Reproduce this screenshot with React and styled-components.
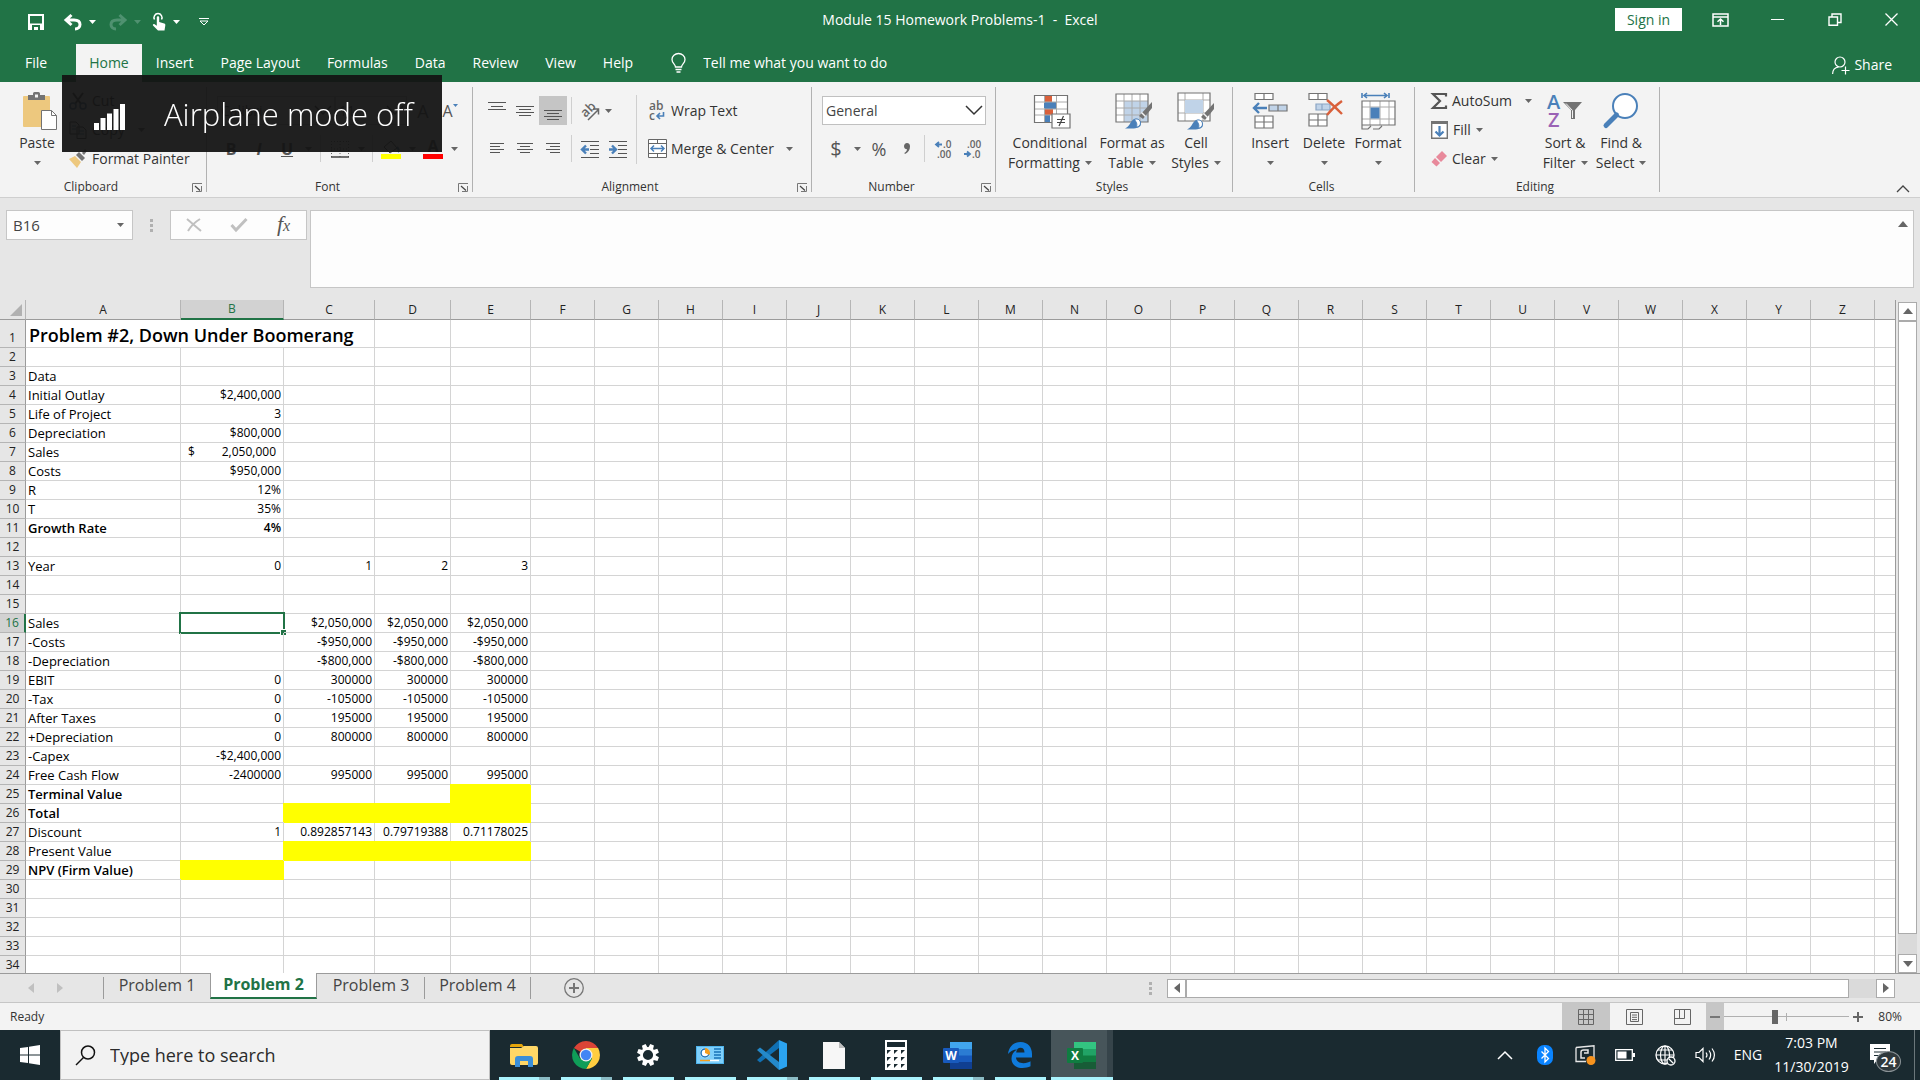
import React from "react";
import styled, { createGlobalStyle, css } from "styled-components";

const uiFont = `"Open Sans", "Noto Sans", sans-serif`;

/* ---------- sheet data ---------- */

const columns = [
  ["A", 155],
  ["B", 103],
  ["C", 91],
  ["D", 76],
  ["E", 80],
  ..."FGHIJKLMNOPQRSTUVWXYZ".split("").map((c) => [c, 64]),
  ["", 64],
];

const rows = {
  3: { cells: ["Data"] },
  4: { cells: ["Initial Outlay", "$2,400,000"] },
  5: { cells: ["Life of Project", "3"] },
  6: { cells: ["Depreciation", "$800,000"] },
  7: { cells: ["Sales", "2,050,000"], accounting: 1 },
  8: { cells: ["Costs", "$950,000"] },
  9: { cells: ["R", "12%"] },
  10: { cells: ["T", "35%"] },
  11: { cells: ["Growth Rate", "4%"], bold: true },
  13: { cells: ["Year", "0", "1", "2", "3"] },
  16: { cells: ["Sales", "", "$2,050,000", "$2,050,000", "$2,050,000"] },
  17: { cells: ["-Costs", "", "-$950,000", "-$950,000", "-$950,000"] },
  18: { cells: ["-Depreciation", "", "-$800,000", "-$800,000", "-$800,000"] },
  19: { cells: ["EBIT", "0", "300000", "300000", "300000"] },
  20: { cells: ["-Tax", "0", "-105000", "-105000", "-105000"] },
  21: { cells: ["After Taxes", "0", "195000", "195000", "195000"] },
  22: { cells: ["+Depreciation", "0", "800000", "800000", "800000"] },
  23: { cells: ["-Capex", "-$2,400,000"] },
  24: { cells: ["Free Cash Flow", "-2400000", "995000", "995000", "995000"] },
  25: { cells: ["Terminal Value"], bold: true, fill: [4] },
  26: { cells: ["Total"], bold: true, fill: [2, 3, 4] },
  27: { cells: ["Discount", "1", "0.892857143", "0.79719388", "0.71178025"] },
  28: { cells: ["Present Value"], fill: [2, 3, 4] },
  29: { cells: ["NPV (Firm Value)"], bold: true, fill: [1] },
};

const rowNumbers = Array.from({ length: 33 }, (_, i) => i + 2);

/* ---------- icons ---------- */

const Svg = ({ w, h, x = 0, children }) => (
  <svg width={w} height={h} viewBox={`${x} 0 ${w} ${h}`} fill="none" aria-hidden="true">
    {children}
  </svg>
);

const Caret = ({ color = "#666" }) => (
  <Svg w={7} h={4}>
    <path d="M0 0h7L3.5 4z" fill={color} />
  </Svg>
);

const SaveIcon = () => (
  <Svg w={16} h={16}>
    <path d="M0 0h16v16H0zM2 2v7.500h12V2zM4 11v5h2v-3h2v3h4v-5z" fill="#fff" fillRule="evenodd" />
    <path d="M8 13h2v3H8z" fill="#fff" />
  </Svg>
);

const UndoIcon = ({ flip, color = "#fff" }) => (
  <Svg w={18} h={16}>
    <g transform={flip ? "translate(18 0) scale(-1 1)" : undefined}>
      <path d="M7.500 1L2 6l5.500 5M2 6h8c4 0 6 2 6 4.500S14 15 11 15" stroke={color} strokeWidth="3" />
    </g>
  </Svg>
);

const TouchIcon = () => (
  <Svg w={14} h={18}>
    <path d="M2.500 6.500a4 4 0 1 1 7 0" stroke="#fff" strokeWidth="1.500" />
    <path d="M4.800 4.500c0-1.600 2.400-1.600 2.400 0V9l5 1.500c1 .4 1.300 1 1.100 2L12.500 17.500H6L1 12.500c-.6-1 .6-2 1.600-1.200l2.200 1.400z" fill="#fff" />
  </Svg>
);

const QatMoreIcon = () => (
  <Svg w={10} h={8}>
    <path d="M0 .5h10M1 3h8L5 7z" stroke="#fff" />
  </Svg>
);

const RibbonDisplayIcon = () => (
  <Svg w={17} h={14}>
    <path d="M1 1h15v12H1zM1 4h15" stroke="#fff" strokeWidth="1.500" />
    <path d="M8.500 12V6M5.500 8.700L8.500 6l3 2.700" stroke="#fff" strokeWidth="1.500" />
  </Svg>
);

const MinimizeIcon = () => (
  <Svg w={13} h={13}>
    <path d="M0 6.500h13" stroke="#fff" />
  </Svg>
);

const RestoreIcon = () => (
  <Svg w={14} h={13}>
    <path d="M1 4h8.500v8.300H1zM4 4V1h9v8.500H9.500" stroke="#fff" strokeWidth="1.400" />
  </Svg>
);

const CloseIcon = () => (
  <Svg w={13} h={13}>
    <path d="M.5.5l12 12M12.500.5l-12 12" stroke="#fff" strokeWidth="1.300" />
  </Svg>
);

const BulbIcon = () => (
  <Svg w={15} h={20}>
    <path d="M4.500 14c0-3-3.500-3.500-3.500-7.500a6.500 6 0 0 1 13 0C14 10.500 10.500 11 10.500 14zM4.500 16.500h6M5.500 19h4" stroke="#fff" strokeWidth="1.300" />
  </Svg>
);

const ShareIcon = () => (
  <Svg w={18} h={19}>
    <circle cx="8" cy="6" r="5" stroke="#fff" strokeWidth="1.200" />
    <path d="M.6 18c0-4 2.400-6.500 6-7M13.500 10.500v8M9.500 14.500h8" stroke="#fff" strokeWidth="1.200" />
  </Svg>
);

const PasteIcon = () => (
  <Svg w={39} h={38} x={-4}>
    <rect x="1" y="4" width="27" height="31" rx="1" fill="#edc87e" />
    <path d="M6 3h5V1.500Q11 0 12.500 0h4Q18 0 18 1.500V3h5v5H6z" fill="#737373" />
    <path d="M13 2.500h3v3h-3z" fill="#f3f3f3" />
    <path d="M19.500 18.500h10l5 5v14h-15z" fill="#fff" stroke="#737373" />
    <path d="M29.500 18.500v5h5" stroke="#737373" />
  </Svg>
);

const CutIcon = () => (
  <Svg w={18} h={18}>
    <path d="M4 1l8 11M14 1L6 12" stroke="#444" strokeWidth="2" />
    <circle cx="4" cy="14" r="3" stroke="#41719c" strokeWidth="1.500" />
    <circle cx="14" cy="14" r="3" stroke="#41719c" strokeWidth="1.500" />
  </Svg>
);

const CopyIcon = () => (
  <Svg w={18} h={18}>
    <path d="M1 1h6l3 3v9H1zM8 6h6l3 3v8.500H8z" fill="#fff" stroke="#444" />
    <path d="M3 5h4M3 8h4M10 10h5M10 13h5" stroke="#41719c" />
  </Svg>
);

const PainterIcon = () => (
  <Svg w={18} h={18}>
    <path d="M0 9l6-3 6 6-4 6z" fill="#edc87e" />
    <path d="M7 5l3-3 6 6-3 3z" fill="#737373" />
    <path d="M13 3l3-4 2 2-3 4z" fill="#737373" />
  </Svg>
);

const LauncherIcon = () => (
  <Svg w={10} h={9}>
    <path d="M.5 9V.5H10M9.500 3v5.500H4" stroke="#777" />
    <path d="M3 3l5 4.500" stroke="#444" strokeWidth="1.200" />
  </Svg>
);

const BordersIcon = () => (
  <Svg w={18} h={18}>
    <path d="M.5 1v16M17.500 1v16M9 1v16M0 1.500h18M0 9h18" stroke="#666" strokeDasharray="1 2" />
    <path d="M0 17h18" stroke="#444" strokeWidth="1.500" />
  </Svg>
);

const FillColorIcon = () => (
  <Svg w={20} h={20}>
    <path d="M3 8l7-6 6 7-7 5z" fill="#fff" stroke="#444" />
    <path d="M16 8c2 2 2 4 1 5" stroke="#41719c" strokeWidth="2" />
    <path d="M0 15h20v5H0z" fill="#ff0" />
  </Svg>
);

// one bar per entry: [x, y, width]
const Lines = ({ w = 18, h = 18, list }) => (
  <Svg w={w} h={h}>
    {list.map(([x, y, len]) => (
      <path key={`${x}-${y}`} d={`M${x} ${y}.5h${len}`} stroke="#555" />
    ))}
  </Svg>
);

const topLines = [[0, 0, 18], [3, 4, 12], [0, 7, 18]];
const midLines = [[0, 4, 18], [3, 7, 12], [0, 10, 18], [3, 13, 12]];
const bottomLines = [[0, 8, 18], [3, 11, 12], [0, 14, 18], [3, 17, 12]];
const leftLines = [[2, 3, 14], [2, 6, 10], [2, 9, 14], [2, 12, 10]];
const centerLines = [[1, 3, 16], [4, 6, 10], [1, 9, 16], [4, 12, 10]];
const rightLines = [[2, 3, 14], [6, 6, 10], [2, 9, 14], [6, 12, 10]];

const IndentIcon = ({ out }) => (
  <Svg w={18} h={18}>
    <path d="M0 1.500h18M9 5.500h9M9 9.500h9M9 13.500h9M0 17.500h18" stroke="#555" />
    <path d={out ? "M8 9.500H2M5 5.500l-4 4 4 4" : "M0 9.500h6M3 5.500l4 4-4 4"} stroke="#4a80b9" strokeWidth="2.400" />
  </Svg>
);

const OrientationIcon = () => (
  <Svg w={20} h={20}>
    <text x="1" y="14" transform="rotate(-45 7 10)" fontFamily="Open Sans" fontSize="13" fontWeight="600" fill="#666">
      ab
    </text>
    <path d="M8 19L18 9M13 8h5.500v5.500" stroke="#666" strokeWidth="1.500" />
  </Svg>
);

const WrapIcon = () => (
  <Svg w={18} h={20}>
    <text x="1" y="9" fontFamily="Open Sans" fontSize="12" fontWeight="600" fill="#666">
      ab
    </text>
    <text x="1" y="19" fontFamily="Open Sans" fontSize="12" fontWeight="600" fill="#666">
      c
    </text>
    <path d="M15.500 11v4H9.500M12 12l-3 3 3 3" stroke="#4a80b9" strokeWidth="1.600" />
  </Svg>
);

const MergeIcon = () => (
  <Svg w={19} h={19}>
    <path d="M.5.500h18v18H.5zM.5 4.500h18M.5 14.500h18M9.500.5v4M9.500 14.500v4" fill="#fff" stroke="#666" />
    <path d="M3 9.500h13M6 6.500l-3 3 3 3M13 6.500l3 3-3 3" stroke="#4a80b9" strokeWidth="1.500" />
  </Svg>
);

const CommaIcon = () => (
  <Svg w={8} h={12}>
    <path d="M4 0c2 0 3 1.400 3 3.500C7 7 5 9.500 2 11l-.7-1C3 9 4 7.700 4 6.200 2.300 6.200 1 5 1 3.200S2.300 0 4 0z" fill="#666" />
  </Svg>
);

const DecimalIcon = ({ increase }) => (
  <Svg w={18} h={18}>
    <text x={increase ? 8 : 4} y="8" fontFamily="Open Sans" fontSize="10" fontWeight="600" fill="#666">
      {increase ? ".0" : ".00"}
    </text>
    <text x={increase ? 2 : 9} y="18" fontFamily="Open Sans" fontSize="10" fontWeight="600" fill="#666">
      {increase ? ".00" : ".0"}
    </text>
    <path d={increase ? "M7 4.500H2M4 2L1 4.500 4 7" : "M1 14h5M4 11.500L7 14l-3 2.500"} stroke="#4a80b9" strokeWidth="1.800" />
  </Svg>
);

const ConditionalIcon = () => (
  <Svg w={41} h={36} x={-3}>
    <path d="M1 2h33v27H1z" fill="#fff" />
    <path d="M11 2h8v7h-8zM11 16h9v6h-9z" fill="#d9603b" />
    <path d="M11 9h12v7H11zM11 22h6v7h-6z" fill="#4a80b9" />
    <path d="M1 9h33M1 16h33M1 22h33M11.500 2v27M23.500 2v27" stroke="#aaa" />
    <path d="M11 10h12v5H11z" fill="#4a80b9" />
    <path d="M1.500 2.500h33v27h-33z" stroke="#737373" strokeWidth="1.200" />
    <path d="M19 21h18v14H19z" fill="#fff" stroke="#737373" strokeWidth="1.200" />
    <path d="M24 26.500h8M24 29.500h8M30.500 23l-4.500 10" stroke="#444" strokeWidth="1.200" />
  </Svg>
);

const Brush = () => (
  <>
    <path d="M24 23L37 9v6l-9 11z" fill="#737373" />
    <path d="M26.500 19.500l4 4" stroke="#f3f3f3" strokeWidth="1.500" />
    <path d="M10 35.500c5-2 5-7 9-9.500 3-1 7 1 7 5 0 3-4 4.500-9 4.500z" fill="#4a80b9" />
    <path d="M19.500 26.500c3-1.500 6 .5 6 3.500s-2.500 4-4.500 4c1.500-2 1-4-1.500-7.500z" fill="#fff" stroke="#4a80b9" />
  </>
);

const FormatTableIcon = () => (
  <Svg w={41} h={36} x={-3}>
    <path d="M1 1h32v28H1z" fill="#fff" />
    <path d="M9 8h24v21H9z" fill="#c0d3e8" />
    <path d="M1 8h32M1 15h32M1 22h32M9 1v28M17 1v28M25 1v28" stroke="#aaa" />
    <path d="M1 1h32v28H1z" stroke="#737373" strokeWidth="1.200" />
    <Brush />
  </Svg>
);

const CellStylesIcon = () => (
  <Svg w={38} h={38}>
    <path d="M1 1h32v28H1z" fill="#fff" />
    <path d="M8 1v28M26 1v28M1 8h32M1 21h32" stroke="#aaa" />
    <path d="M8 8h18v13H8z" fill="#c0d3e8" />
    <path d="M1 1h32v28H1z" stroke="#737373" strokeWidth="1.200" />
    <g transform="translate(0 2)">
      <Brush />
    </g>
  </Svg>
);

const InsertIcon = () => (
  <Svg w={38} h={38}>
    <path d="M4 1.500h18v6H4zM13 1.500v6M4 24h18v12H4zM13 24v12M4 30h18" fill="#fff" stroke="#737373" strokeWidth="1.200" />
    <path d="M18 13h18v6H18zM27 13v6" fill="#c0d3e8" stroke="#737373" strokeWidth="1.200" />
    <path d="M16 16H3M8 11l-5 5 5 5" stroke="#4a80b9" strokeWidth="2.400" />
  </Svg>
);

const DeleteIcon = () => (
  <Svg w={38} h={38}>
    <path d="M4 1.500h18v6H4zM13 1.500v6M4 22h18v12H4zM13 22v12M4 28h18" fill="#fff" stroke="#737373" strokeWidth="1.200" />
    <path d="M11 12h14v6H11zM17 12v6" fill="#c0d3e8" stroke="#8aa5c4" strokeWidth="1.200" />
    <path d="M22 8c5 4 10 9 15 14M37 9c-6 4-11 9-15 14" stroke="#d9603b" strokeWidth="2.400" />
  </Svg>
);

const FormatIcon = () => (
  <Svg w={38} h={38}>
    <path d="M3 1v5M30 1v5M5 3.500h23M8 1L5 3.500 8 6M25 1l3 2.500L25 6" stroke="#4a80b9" strokeWidth="1.600" />
    <path d="M3 9h33v24H3z" fill="#fff" />
    <path d="M3 15h33M3 27h33M11 9v24M21 9v24M30 9v24" stroke="#aaa" />
    <path d="M11.500 15.500h9v11h-9z" fill="#4a80b9" />
    <path d="M3 9h33v24H3zM3 33v4h6l3-3M14 37h6l3-3" stroke="#737373" strokeWidth="1.200" />
  </Svg>
);

const SumIcon = () => (
  <Svg w={16} h={18}>
    <path d="M15 4.500V2H2l7 7-7 7h13v-2.500" stroke="#555" strokeWidth="2.200" />
  </Svg>
);

const FillDownIcon = () => (
  <Svg w={17} h={18}>
    <path d="M.7.700h15.600v16.600H.7z" fill="#fff" stroke="#737373" strokeWidth="1.400" />
    <path d="M0 0h17v3H0z" fill="#737373" />
    <path d="M8.500 5v9M4.500 10.500l4 4 4-4" stroke="#4a80b9" strokeWidth="2.200" />
  </Svg>
);

const EraserIcon = () => (
  <Svg w={16} h={16}>
    <path d="M5 6l6-6 5 5-6 6z" fill="#e8899b" />
    <path d="M4 7l5 5-3.500 3.500-5-4.500z" fill="#e8899b" />
  </Svg>
);

const SortIcon = () => (
  <Svg w={36} h={36}>
    <text x="0" y="16" fontFamily="Open Sans" fontSize="20" fontWeight="600" fill="#4a80b9">
      A
    </text>
    <text x="1" y="34" fontFamily="Open Sans" fontSize="20" fontWeight="600" fill="#9a62b5">
      Z
    </text>
    <path d="M16 9h19l-7 8v9h-4v-9z" fill="#737373" />
    <path d="M19 10.500l6.500 7V25" stroke="#f3f3f3" />
  </Svg>
);

const FindIcon = () => (
  <Svg w={36} h={36}>
    <circle cx="22" cy="13" r="12" fill="#fff" stroke="#4a80b9" strokeWidth="2" />
    <path d="M13.500 22L3 32.500" stroke="#4a80b9" strokeWidth="5" strokeLinecap="round" />
  </Svg>
);

const CollapseIcon = () => (
  <Svg w={14} h={8}>
    <path d="M1 7l6-6 6 6" stroke="#444" strokeWidth="1.300" />
  </Svg>
);

const ChevronDown = () => (
  <Svg w={18} h={11}>
    <path d="M1 1l8 8 8-8" stroke="#333" strokeWidth="1.500" />
  </Svg>
);

const SignalIcon = () => (
  <Svg w={31} h={26}>
    <path d="M0 19h5v7H0zM6.500 14h5v12h-5zM13 9.500h5V26h-5zM19.500 5h5v21h-5zM26 0h5v26h-5z" fill="#fff" />
  </Svg>
);

const DotsIcon = () => (
  <Svg w={3} h={13}>
    <path d="M0 0h3v3H0zM0 5h3v3H0zM0 10h3v3H0z" fill="#b0b0b0" />
  </Svg>
);

const CancelIcon = () => (
  <Svg w={16} h={14}>
    <path d="M1 1l14 12M14 1C9 4 5 8 2 13" stroke="#c0c0c0" strokeWidth="2" />
  </Svg>
);

const EnterIcon = () => (
  <Svg w={18} h={14}>
    <path d="M1.500 7L6 12 16.500 1" stroke="#c0c0c0" strokeWidth="3" />
  </Svg>
);

const Triangle = ({ dir, color = "#666" }) => {
  const d = { up: "M0 6h10L5 0z", down: "M0 1h10L5 7z", left: "M6 0v10L0 5z", right: "M0 0v10l6-5z" }[dir];
  const tall = dir === "left" || dir === "right";
  return (
    <Svg w={tall ? 6 : 10} h={tall ? 10 : 7}>
      <path d={d} fill={color} />
    </Svg>
  );
};

const PlusCircle = () => (
  <Svg w={20} h={20}>
    <circle cx="10" cy="10" r="9.300" stroke="#777" strokeWidth="1.300" />
    <path d="M10 5v10M5 10h10" stroke="#777" strokeWidth="2" />
  </Svg>
);

const NormalViewIcon = () => (
  <Svg w={16} h={16}>
    <path d="M.5.500h15v15H.5zM5.500.5v15M10.500.5v15M.5 5.500h15M.5 10.500h15" stroke="#666" />
  </Svg>
);

const PageViewIcon = () => (
  <Svg w={17} h={16}>
    <path d="M.5.500h16v15H.5zM4.500 3.500h8v9h-8z" stroke="#666" />
    <path d="M6 6h5M6 8.300h5M6 10.600h5" stroke="#666" />
  </Svg>
);

const BreakViewIcon = () => (
  <Svg w={17} h={16}>
    <path d="M.5.500h16v15H.5zM.5 9.500h10V.5M5.500.5v9" stroke="#666" />
  </Svg>
);

const WindowsIcon = () => (
  <Svg w={20} h={20}>
    <path d="M0 3l8-1v7.500H0zM9 1.800L20 0v9.500H9zM0 10.500h8V18l-8-1zM9 10.500h11V20L9 18.200z" fill="#fff" />
  </Svg>
);

const SearchIcon = () => (
  <Svg w={21} h={21}>
    <circle cx="13" cy="7.500" r="6.500" stroke="#111" strokeWidth="1.500" />
    <path d="M8.500 12.500L1 20" stroke="#111" strokeWidth="1.500" />
  </Svg>
);

const ExplorerIcon = () => (
  <Svg w={28} h={24}>
    <path d="M0 3q0-2 2-2h10l2 3H0z" fill="#e5a50a" />
    <path d="M0 5h11l3-2h12q2 0 2 2v15q0 2-2 2H2q-2 0-2-2z" fill="#ffd766" />
    <path d="M5 24v-8q0-3 3-3h12q3 0 3 3v8h-5v-6h-8v6z" fill="#3b8fd9" />
  </Svg>
);

const ChromeIcon = () => (
  <Svg w={28} h={28}>
    <path d="M14 14L1.900 7A14 14 0 0 1 26.100 7z" fill="#db4437" />
    <path d="M14 14V7h12.100A14 14 0 0 1 14 28l6-11z" fill="#ffcd40" />
    <path d="M14 14L8 17.500 1.900 7A14 14 0 0 0 14 28l6-10.500z" fill="#0f9d58" />
    <circle cx="14" cy="14" r="6.500" fill="#f1f1f1" />
    <circle cx="14" cy="14" r="5.200" fill="#4285f4" />
  </Svg>
);

const GearIcon = () => (
  <Svg w={22} h={22}>
    <circle cx="11" cy="11" r="6.500" stroke="#fff" strokeWidth="2.800" />
    {[22, 67, 112, 157, 202, 247, 292, 337].map((a) => (
      <path key={a} d="M9 0h4l.5 4h-5z" fill="#fff" transform={`rotate(${a} 11 11)`} />
    ))}
  </Svg>
);

const PanelIcon = () => (
  <Svg w={28} h={20}>
    <path d="M0 1h28v18H0z" fill="#4fb4ec" />
    <path d="M1 2h26v16H1z" fill="#7fd0fb" />
    <circle cx="9" cy="8" r="5" fill="#fff" />
    <circle cx="9" cy="8" r="4" stroke="#1873b8" strokeWidth="1.500" />
    <path d="M9 8V3a5 5 0 0 1 4.500 7z" fill="#f59e1b" />
    <path d="M18 4h7M18 7h7M18 10h7M18 13h7" stroke="#1873b8" strokeWidth="1.500" />
    <path d="M4 15.500h10" stroke="#f59e1b" strokeWidth="1.500" />
    <path d="M14 15.500h9" stroke="#fff" strokeWidth="1.500" />
  </Svg>
);

const CodeIcon = () => (
  <Svg w={30} h={30}>
    <path d="M0 20l3 2.500L22 8V0z" fill="#1070b3" />
    <path d="M0 10l3-2.500L22 22v8z" fill="#2489ca" />
    <path d="M22 0l8 3.500v23L22 30z" fill="#2ba3f0" />
  </Svg>
);

const FileIcon = () => (
  <Svg w={22} h={27}>
    <path d="M0 0h16l6 6v21H0z" fill="#f7f7f7" />
    <path d="M16 0v6h6z" fill="#bdbdbd" />
  </Svg>
);

const CalcIcon = () => (
  <Svg w={22} h={30}>
    <path d="M0 0h22v30H0z" fill="#fff" />
    <path d="M2 2h18v5H2z" fill="#1a2a30" />
    {[10, 17, 24].map((y) =>
      [2, 9, 16].map((x) => <path key={`${x}-${y}`} d={`M${x} ${y}h4l-4 4z`} fill="#1a2a30" />)
    )}
  </Svg>
);

const OfficeIcon = ({ letter, shades, badge }) => (
  <Svg w={30} h={27}>
    <path d="M7 0h22v7H7z" fill={shades[0]} />
    <path d="M7 7h22v7H7z" fill={shades[1]} />
    <path d="M7 13.500h22v7H7z" fill={shades[2]} />
    <path d="M7 20h22v7H7z" fill={shades[3]} />
    <rect y="6" width="16" height="15" rx="1" fill={badge} />
    <text x="8" y="18" textAnchor="middle" fontFamily="Open Sans" fontSize="12" fontWeight="700" fill="#fff">
      {letter}
    </text>
  </Svg>
);

const EdgeIcon = () => (
  <Svg w={24} h={26}>
    <path
      d="M0 12C1 4 6 0 12.500 0 20 0 24 5.500 24 12v3.500H8c.3 4 3.500 5.700 7.500 5.700 3 0 5.300-.8 7-1.900v5c-2.200 1.200-5 1.700-8 1.700C7.500 26 3.500 22 3.500 16.500c0-4 2-7 5.500-9C5.500 7.500 2 9.500 0 12zm8.200-1.500h8.300c0-3-1.300-4.700-4-4.700-2.400 0-4 1.900-4.300 4.700z"
      fill="#0f7bdc"
      fillRule="evenodd"
    />
  </Svg>
);

const TrayCaret = () => (
  <Svg w={16} h={9}>
    <path d="M1 8l7-7 7 7" stroke="#fff" strokeWidth="1.500" />
  </Svg>
);

const BluetoothIcon = () => (
  <Svg w={16} h={20}>
    <rect width="16" height="20" rx="7" fill="#0a84ff" />
    <path d="M4.500 6.500l7 7L8 17V3l3.500 3.500-7 7" stroke="#fff" strokeWidth="1.300" />
  </Svg>
);

const TabletIcon = () => (
  <Svg w={21} h={20}>
    <path d="M1 2.500L19 .8v13M11 16.500H1v-14" stroke="#e8e8e8" strokeWidth="1.300" />
    <path d="M10 13H6V7q0-2 2.500-2H13v3H9" stroke="#e8e8e8" strokeWidth="1.500" />
    <circle cx="16" cy="15.500" r="4.500" fill="#f7931e" />
  </Svg>
);

const BatteryIcon = () => (
  <Svg w={20} h={12}>
    <path d="M.7.700h16.600v10.600H.7z" stroke="#fff" strokeWidth="1.300" />
    <path d="M2.500 2.500h9v7h-9zM18 4h2v4h-2z" fill="#fff" />
  </Svg>
);

const GlobeIcon = () => (
  <Svg w={21} h={21}>
    <circle cx="10" cy="10" r="9" stroke="#fff" strokeWidth="1.300" />
    <path d="M10 1v18M1 10h18M3 5h14M3 15h9" stroke="#fff" strokeWidth="1.200" />
    <ellipse cx="10" cy="10" rx="4.500" ry="9" stroke="#fff" strokeWidth="1.200" />
    <circle cx="16" cy="16" r="4" fill="#1a2a30" stroke="#fff" strokeWidth="1.300" />
    <path d="M13.500 13.500l5 5" stroke="#fff" strokeWidth="1.300" />
  </Svg>
);

const SpeakerIcon = () => (
  <Svg w={21} h={16}>
    <path d="M1 5.500h3l4-4v13l-4-4H1z" stroke="#fff" strokeWidth="1.200" />
    <path d="M11 5.500c1.200 1.500 1.200 3.500 0 5M14 3.500c2 2.700 2 6.300 0 9M17 1.500c3 4 3 9 0 13" stroke="#fff" strokeWidth="1.200" />
  </Svg>
);

const NoteIcon = () => (
  <Svg w={20} h={20}>
    <path d="M0 0h20v16H7l-3 4v-4H0z" fill="#fff" />
    <path d="M4 4.500h12M4 8h12M4 11.500h8" stroke="#1a2a30" strokeWidth="1.200" />
  </Svg>
);

/* ---------- styled parts ---------- */

const GlobalStyle = createGlobalStyle`
  * {
    box-sizing: border-box;
  }

  body {
    margin: 0;
    background: #e6e6e6;
    overflow: hidden;
  }

  svg {
    display: block;
    flex-shrink: 0;
    overflow: visible;
  }

  button, input, select, textarea {
    font: inherit;
    color: inherit;
    margin: 0;
    padding: 0;
    border: 0;
    border-radius: 0;
    background: none;
    outline: 0;
  }

  a {
    color: inherit;
    text-decoration: none;
  }
`;

const Window = styled.div`
  display: flex;
  flex-direction: column;
  height: 100vh;
  font-family: ${uiFont};
  font-size: 14px;
  line-height: 20px;
  color: #333;
`;

const TitleBar = styled.header`
  display: grid;
  grid-template-columns: 1fr auto 1fr;
  align-items: center;
  height: 44px;
  padding-bottom: 5px;
  background: #217346;
  color: #fff;
`;

const QuickAccess = styled.div`
  display: flex;
  align-items: center;
  padding: 5px 0 0 22px;
`;

const QuickButton = styled.button`
  display: flex;
  align-items: center;
  justify-content: center;
  gap: 7px;
  height: 28px;
  width: ${(p) => p.$width}px;
`;

const WindowControls = styled.div`
  display: flex;
  justify-content: flex-end;
  align-items: center;
`;

const ControlButton = styled.button`
  display: flex;
  align-items: center;
  justify-content: center;
  width: 57px;
  height: 32px;
`;

const SignIn = styled.button`
  width: 67px;
  height: 23px;
  margin-right: 10px;
  background: #fff;
  color: #217346;
`;

const TabBar = styled.nav`
  display: flex;
  align-items: stretch;
  gap: 1px;
  height: 38px;
  padding-left: 12px;
  background: #217346;
  color: #fff;
`;

const RibbonTab = styled.a`
  display: flex;
  align-items: center;
  padding: 0 13px;

  ${(p) =>
    p.$file &&
    css`
      margin-right: 15px;
    `}

  ${(p) =>
    p.$active &&
    css`
      background: #f3f3f3;
      color: #217346;
    `}
`;

const TellMe = styled.label`
  display: flex;
  align-items: center;
  gap: 17px;
  margin-left: 24px;

  input {
    width: 240px;
  }

  input::placeholder {
    color: #fff;
    opacity: 1;
  }
`;

const Share = styled.button`
  display: flex;
  align-items: center;
  gap: 4px;
  margin-left: auto;
  padding: 4px 28px 0 0;
`;

const Ribbon = styled.section`
  display: flex;
  height: 116px;
  background: #f3f3f3;
  border-bottom: 1px solid #cfcfcf;
`;

const Group = styled.div`
  display: flex;
  flex-direction: column;
  width: ${(p) => p.$width}px;
  margin: 5px 0;
  border-right: 1px solid #b1b1b1;
`;

const GroupBody = styled.div`
  display: flex;
  flex: 1;
  min-height: 0;
  padding: ${(p) => p.$pad || "0"};
`;

const GroupFooter = styled.div`
  display: flex;
  align-items: center;
  height: 18px;
  margin-bottom: -4px;
  padding-right: 4px;
  font-size: 12px;
  text-align: center;

  span {
    flex: 1;
  }

  button {
    padding-left: 10px;
  }
`;

const BigButton = styled.button`
  display: flex;
  flex-direction: column;
  align-items: center;
  width: ${(p) => p.$width}px;
  padding-top: 2px;
`;

const BigIcon = styled.span`
  display: flex;
  align-items: center;
  justify-content: center;
  height: 44px;
`;

const BigLine = styled.span`
  display: flex;
  align-items: center;
  justify-content: center;
  gap: 5px;
  height: 20px;
  white-space: nowrap;
`;

const SmallColumn = styled.div`
  display: flex;
  flex-direction: column;
  margin-top: -1px;
  padding: 0 5px;
`;

const SmallButton = styled.button`
  display: flex;
  align-items: center;
  gap: ${(p) => p.$gap || 5}px;
  height: 29px;
  white-space: nowrap;

  ${(p) =>
    p.$wide &&
    css`
      > :last-child {
        margin-left: 8px;
      }
    `}
`;

const ToolRows = styled.div`
  display: flex;
  flex-direction: column;
  gap: 9px;
  padding-top: 9px;
`;

const ToolRow = styled.div`
  display: flex;
  align-items: center;
  height: 29px;
`;

const ToolButton = styled.button`
  display: flex;
  align-items: center;
  justify-content: center;
  width: ${(p) => p.$width || 28}px;
  height: 29px;
  font-size: ${(p) => p.$size || 14}px;
  font-weight: ${(p) => (p.$bold ? 700 : 400)};
  font-style: ${(p) => (p.$italic ? "italic" : "normal")};
  text-decoration: ${(p) => (p.$underline ? "underline" : "none")};
  background: ${(p) => (p.$pressed ? "#c5c5c5" : "transparent")};
  color: #555;
`;

const FontColor = styled.span`
  width: 20px;
  height: 20px;
  line-height: 14px;
  font-weight: 700;
  font-size: 16px;
  border-bottom: 5px solid #f00;
`;

const Divider = styled.span`
  width: 1px;
  height: ${(p) => p.$height || 27}px;
  margin: ${(p) => p.$margin || "0 4px"};
  background: #cfcfcf;
`;

const SelectBox = styled.span`
  position: relative;
  display: block;
  width: ${(p) => p.$width}px;
  height: 29px;

  select {
    appearance: none;
    width: 100%;
    height: 100%;
    padding-left: 3px;
    background: #fff;
    border: 1px solid #c0c0c0;
    color: #444;
  }

  svg {
    position: absolute;
    right: 3px;
    top: 9px;
    pointer-events: none;
  }
`;

const CollapseButton = styled.button`
  margin: auto 10px 4px auto;
`;

const Toast = styled.div`
  position: fixed;
  z-index: 5;
  left: 62px;
  top: 75px;
  display: flex;
  align-items: center;
  gap: 39px;
  width: 380px;
  height: 77px;
  padding-left: 32px;
  background: rgba(20, 20, 20, 0.95);
  color: #fff;
  font-size: 31px;
  font-weight: 300;
  line-height: 40px;
  white-space: nowrap;

  svg {
    margin-top: 7px;
  }
`;

const FormulaBar = styled.section`
  display: flex;
  align-items: flex-start;
  height: 102px;
  padding: 12px 6px 0;
`;

const NameBox = styled.div`
  display: flex;
  align-items: center;
  width: 127px;
  height: 30px;
  padding: 0 8px 0 6px;
  background: #fdfdfd;
  border: 1px solid #c6c6c6;
  font-size: 15px;

  input {
    flex: 1;
    min-width: 0;
    color: #444;
  }
`;

const BarDots = styled.div`
  display: flex;
  align-items: center;
  justify-content: center;
  width: 37px;
  height: 30px;
`;

const FormulaButtons = styled.div`
  display: flex;
  justify-content: space-around;
  width: 137px;
  height: 30px;
  margin-right: 3px;
  background: #fdfdfd;
  border: 1px solid #c6c6c6;

  button {
    display: flex;
    align-items: center;
    justify-content: center;
    width: 44px;
  }
`;

const Fx = styled.span`
  font-family: "Liberation Serif", serif;
  font-style: italic;
  font-size: 22px;
  color: #555;

  small {
    font-size: 16px;
  }
`;

const FormulaInput = styled.div`
  display: flex;
  flex: 1;
  height: 78px;
  background: #fdfdfd;
  border: 1px solid #c6c6c6;

  textarea {
    flex: 1;
    resize: none;
  }

  button {
    display: flex;
    align-items: flex-start;
    padding: 10px 5px 0;
  }
`;

const Workspace = styled.main`
  display: flex;
  flex: 1;
  min-height: 0;
`;

const SheetArea = styled.div`
  flex: 1;
  min-width: 0;
  overflow: hidden;
`;

const Sheet = styled.table`
  table-layout: fixed;
  width: 1939px;
  border-spacing: 0;
  background: #fff;
  font-size: 13px;
  line-height: 18px;
  color: #000;
`;

const ColHead = styled.th`
  height: 20px;
  padding: 0;
  background: ${(p) => (p.$active ? "#d2d2d2" : "#e6e6e6")};
  border-right: 1px solid #b5b5b5;
  border-bottom: ${(p) => (p.$active ? "2px solid #217346" : "1px solid #9b9b9b")};
  color: ${(p) => (p.$active ? "#217346" : "#222")};
  font-size: 12px;
  font-weight: 400;
`;

const Corner = styled.th`
  padding: 0 3px 3px 0;
  background: #e6e6e6;
  border-right: 1px solid #b5b5b5;
  border-bottom: 1px solid #9b9b9b;
  vertical-align: bottom;

  svg {
    margin-left: auto;
  }
`;

const RowHead = styled.th`
  height: ${(p) => p.$height || 19}px;
  padding: 0;
  background: ${(p) => (p.$active ? "#d2d2d2" : "#e6e6e6")};
  border-right: ${(p) => (p.$active ? "2px solid #217346" : "1px solid #9b9b9b")};
  border-bottom: 1px solid #b5b5b5;
  color: ${(p) => (p.$active ? "#217346" : "#222")};
  font-size: 12px;
  font-weight: 400;
  vertical-align: bottom;
`;

const Cell = styled.td`
  position: relative;
  padding: 0 2px;
  border-right: 1px solid #d4d4d4;
  border-bottom: 1px solid #d4d4d4;
  text-align: ${(p) => (p.$number ? "right" : "left")};
  font-weight: ${(p) => (p.$bold ? 600 : 400)};
  font-size: ${(p) => (p.$number ? 12 : 13)}px;
  white-space: nowrap;

  ${(p) =>
    p.$fill &&
    css`
      background: #ff0;
      border-color: #ff0;
      box-shadow: -1px -1px 0 #ff0;
    `}
`;

const TitleCell = styled(Cell)`
  padding: 3px 3px 0;
  font-size: 18px;
  font-weight: 600;
`;

const Accounting = styled.span`
  display: flex;
  justify-content: space-between;
  padding: 0 5px;
`;

const Selection = styled.span`
  position: absolute;
  inset: -2px;
  border: 2px solid #217346;

  &::after {
    content: "";
    position: absolute;
    right: -3px;
    bottom: -3px;
    width: 5px;
    height: 5px;
    background: #217346;
    box-shadow: 0 0 0 1px #fff;
  }
`;

const VScroll = styled.div`
  display: flex;
  flex-direction: column;
  width: 25px;
  padding: 2px 3px 0 2px;
  border-left: 1px solid #9b9b9b;
`;

const ScrollButton = styled.button`
  display: flex;
  align-items: center;
  justify-content: center;
  width: 19px;
  height: 19px;
  background: #fff;
  border: 1px solid #ababab;
`;

const VTrack = styled.div`
  flex: 1;
  width: 19px;
  padding-bottom: 20px;
  background: #dadada;
`;

const Thumb = styled.div`
  width: 100%;
  height: 100%;
  background: #fff;
  border: 1px solid #ababab;
`;

const SheetBar = styled.div`
  display: flex;
  height: 30px;
  padding-right: 25px;
  border-top: 1px solid #9b9b9b;
  border-bottom: 1px solid #c6c6c6;
`;

const SheetNav = styled.div`
  display: flex;
  align-items: center;
  gap: 23px;
  width: 103px;
  padding-left: 28px;
`;

const SheetTabs = styled.div`
  display: flex;
`;

const SheetTab = styled.button`
  width: 107px;
  height: 22px;
  margin-top: 3px;
  padding-bottom: 6px;
  border-left: 1px solid ${(p) => (p.$plain ? "transparent" : "#9b9b9b")};
  font-size: 16px;
  line-height: 16px;
  color: #444;

  &:last-of-type {
    border-right: 1px solid #9b9b9b;
  }

  ${(p) =>
    p.$active &&
    css`
      height: 26px;
      margin-top: -1px;
      padding-bottom: 2px;
      background: #fff;
      border-right: 1px solid #9b9b9b;
      border-bottom: 2px solid #217346;
      font-weight: 700;
      color: #217346;
    `}
`;

const AddSheet = styled.button`
  margin-left: 33px;
`;

const HScroll = styled.div`
  display: flex;
  align-items: center;
  width: 746px;
  margin-left: auto;

  > svg {
    margin-right: 15px;
  }
`;

const HTrack = styled.div`
  flex: 1;
  height: 19px;
  padding-right: 27px;
  background: #dadada;
`;

const StatusBar = styled.footer`
  display: flex;
  align-items: center;
  height: 27px;
  padding: 0 18px 0 10px;
  background: #f3f3f3;
  font-size: 12px;
`;

const ViewButton = styled.button`
  display: flex;
  align-items: center;
  justify-content: center;
  width: 48px;
  height: 27px;
  background: ${(p) => (p.$active ? "#c6c6c6" : "transparent")};
`;

const ZoomButton = styled.button`
  display: flex;
  align-items: center;
  justify-content: center;
  width: 18px;
  height: 27px;
  background: ${(p) => (p.$hover ? "#c6c6c6" : "transparent")};
`;

const ZoomRange = styled.input`
  appearance: none;
  width: 125px;
  height: 14px;
  background:
    linear-gradient(#b0b0b0, #b0b0b0) 50% 50% / 1px 8px no-repeat,
    linear-gradient(#b0b0b0, #b0b0b0) 0 50% / 100% 1px no-repeat;

  &::-webkit-slider-thumb {
    appearance: none;
    width: 6px;
    height: 14px;
    background: #666;
  }
`;

const ZoomLabel = styled.span`
  margin-left: 11px;
`;

const Taskbar = styled.footer`
  display: flex;
  height: 50px;
  background: #1a2a30;
  color: #fff;
`;

const StartButton = styled.button`
  display: flex;
  align-items: center;
  justify-content: center;
  width: 60px;
`;

const SearchBox = styled.label`
  display: flex;
  align-items: center;
  gap: 14px;
  width: 430px;
  margin-right: 3px;
  padding-left: 14px;
  background: #f2f2f2;
  border: 1px solid #c0c0c0;
  color: #2b2b2b;
  font-size: 18px;

  input {
    flex: 1;
  }

  input::placeholder {
    color: #2b2b2b;
    opacity: 1;
  }
`;

const TaskButton = styled.button`
  position: relative;
  display: flex;
  align-items: center;
  justify-content: center;
  width: 62px;
  background: ${(p) => (p.$active ? "linear-gradient(90deg, #47555a 56px, #36444a 56px)" : "transparent")};

  &::after {
    content: "";
    position: absolute;
    left: ${(p) => (p.$active ? 0 : 6)}px;
    right: ${(p) => (p.$active ? 0 : 5)}px;
    bottom: 0;
    height: 3px;
    background: ${(p) => (p.$stacked ? "linear-gradient(90deg, #a9f3fd 40px, #8bbcc5 40px)" : "#a9f3fd")};
  }
`;

const Tray = styled.div`
  display: flex;
  align-items: center;
  margin-left: auto;
`;

const TrayButton = styled.button`
  display: flex;
  align-items: center;
  justify-content: center;
  width: 40px;
  height: 50px;
`;

const Language = styled(TrayButton)`
  width: 46px;
`;

const Clock = styled.button`
  width: 81px;
  font-size: 14px;
  line-height: 24px;
  text-align: center;
`;

const Notifications = styled.button`
  position: relative;
  padding: 0 24px 2px 18px;
`;

const Badge = styled.span`
  position: absolute;
  left: 24px;
  top: 7px;
  width: 25px;
  height: 21px;
  border: 1px solid #8a9296;
  border-radius: 50%;
  background: #30393d;
  font-size: 14px;
  font-weight: 600;
  line-height: 19px;
`;

const ShowDesktop = styled.button`
  width: 6px;
  height: 50px;
  border-left: 1px solid #6b777b;
`;

/* ---------- pieces ---------- */

const RibbonGroup = ({ name, width, pad, launcher, children }) => (
  <Group $width={width}>
    <GroupBody $pad={pad}>{children}</GroupBody>
    <GroupFooter>
      <span>{name}</span>
      {launcher && (
        <button aria-label={`${name} settings`}>
          <LauncherIcon />
        </button>
      )}
    </GroupFooter>
  </Group>
);

const Big = ({ width, icon, lines, caretBelow }) => (
  <BigButton $width={width}>
    <BigIcon>{icon}</BigIcon>
    {lines.map((line, i) => (
      <BigLine key={line}>
        {line}
        {!caretBelow && i === lines.length - 1 && <Caret />}
      </BigLine>
    ))}
    {caretBelow && (
      <BigLine>
        <Caret />
      </BigLine>
    )}
  </BigButton>
);

const CaretButton = ({ width = 18, label }) => (
  <ToolButton $width={width} aria-label={label}>
    <Caret />
  </ToolButton>
);

function SheetRow({ number }) {
  const row = rows[number] || {};
  const cells = row.cells || [];
  const active = number === 16;

  return (
    <tr>
      <RowHead scope="row" $active={active}>
        {number}
      </RowHead>
      {columns.map(([name], i) => (
        <Cell key={name} $number={i > 0} $bold={row.bold} $fill={row.fill?.includes(i)}>
          {row.accounting === i ? (
            <Accounting>
              <span>$</span>
              <span>{cells[i]}</span>
            </Accounting>
          ) : (
            cells[i]
          )}
          {active && i === 1 && <Selection />}
        </Cell>
      ))}
    </tr>
  );
}

function App() {
  return (
    <Window>
      <GlobalStyle />

      <TitleBar>
        <QuickAccess>
          <QuickButton $width={28} aria-label="Save">
            <SaveIcon />
          </QuickButton>
          <QuickButton $width={60} aria-label="Undo">
            <UndoIcon />
            <Caret color="#fff" />
          </QuickButton>
          <QuickButton $width={30} aria-label="Redo">
            <UndoIcon flip color="#4f9170" />
            <Caret color="#4f9170" />
          </QuickButton>
          <QuickButton $width={52} aria-label="Touch mode">
            <TouchIcon />
            <Caret color="#fff" />
          </QuickButton>
          <QuickButton $width={24} aria-label="Customize toolbar">
            <QatMoreIcon />
          </QuickButton>
        </QuickAccess>
        <span>Module 15 Homework Problems-1&nbsp; -&nbsp; Excel</span>
        <WindowControls>
          <SignIn>Sign in</SignIn>
          <ControlButton aria-label="Ribbon display options">
            <RibbonDisplayIcon />
          </ControlButton>
          <ControlButton aria-label="Minimize">
            <MinimizeIcon />
          </ControlButton>
          <ControlButton aria-label="Restore">
            <RestoreIcon />
          </ControlButton>
          <ControlButton aria-label="Close">
            <CloseIcon />
          </ControlButton>
        </WindowControls>
      </TitleBar>

      <TabBar>
        <RibbonTab href="#file" $file>
          File
        </RibbonTab>
        <RibbonTab href="#home" $active>
          Home
        </RibbonTab>
        {["Insert", "Page Layout", "Formulas", "Data", "Review", "View", "Help"].map((tab) => (
          <RibbonTab key={tab} href={`#${tab}`}>
            {tab}
          </RibbonTab>
        ))}
        <TellMe>
          <BulbIcon />
          <input aria-label="Tell me" placeholder="Tell me what you want to do" />
        </TellMe>
        <Share>
          <ShareIcon />
          Share
        </Share>
      </TabBar>

      <Ribbon>
        <RibbonGroup name="Clipboard" width={207} pad="0 0 0 10px" launcher>
          <Big width={54} icon={<PasteIcon />} lines={["Paste"]} caretBelow />
          <SmallColumn>
            <SmallButton>
              <CutIcon />
              Cut
            </SmallButton>
            <SmallButton $wide>
              <CopyIcon />
              Copy
              <Caret />
            </SmallButton>
            <SmallButton>
              <PainterIcon />
              Format Painter
            </SmallButton>
          </SmallColumn>
        </RibbonGroup>

        <RibbonGroup name="Font" width={266} pad="0 0 0 10px" launcher>
          <ToolRows>
            <ToolRow>
              <SelectBox $width={118}>
                <select aria-label="Font">
                  <option>Calibri</option>
                </select>
                <ChevronDown />
              </SelectBox>
              <SelectBox $width={72}>
                <select aria-label="Font size">
                  <option>11</option>
                </select>
                <ChevronDown />
              </SelectBox>
              <ToolButton $width={32} $size={18} aria-label="Increase font size">
                A
              </ToolButton>
              <ToolButton $width={22} $size={16} aria-label="Decrease font size">
                A
                <Svg w={5} h={14}>
                  <path d="M0 0h5L2.500 3z" fill="#4a80b9" />
                </Svg>
              </ToolButton>
            </ToolRow>
            <ToolRow>
              <ToolButton $size={16} $bold>
                B
              </ToolButton>
              <ToolButton $size={16} $bold $italic>
                I
              </ToolButton>
              <ToolButton $size={16} $bold $underline>
                U
              </ToolButton>
              <CaretButton width={14} label="Underline styles" />
              <Divider $margin="0 5px" />
              <ToolButton aria-label="Borders">
                <BordersIcon />
              </ToolButton>
              <CaretButton width={14} label="Border styles" />
              <Divider $margin="0 4px" />
              <ToolButton aria-label="Fill color">
                <FillColorIcon />
              </ToolButton>
              <CaretButton width={14} label="Fill colors" />
              <ToolButton aria-label="Font color">
                <FontColor>A</FontColor>
              </ToolButton>
              <CaretButton width={14} label="Font colors" />
            </ToolRow>
          </ToolRows>
        </RibbonGroup>

        <RibbonGroup name="Alignment" width={339} pad="0 0 0 10px" launcher>
          <ToolRows>
            <ToolRow>
              <ToolButton aria-label="Top align">
                <Lines list={topLines} />
              </ToolButton>
              <ToolButton aria-label="Middle align">
                <Lines list={midLines} />
              </ToolButton>
              <ToolButton $pressed aria-label="Bottom align">
                <Lines list={bottomLines} />
              </ToolButton>
              <Divider />
              <ToolButton aria-label="Orientation">
                <OrientationIcon />
              </ToolButton>
              <CaretButton width={8} label="Orientation options" />
            </ToolRow>
            <ToolRow>
              <ToolButton aria-label="Align left">
                <Lines list={leftLines} />
              </ToolButton>
              <ToolButton aria-label="Center">
                <Lines list={centerLines} />
              </ToolButton>
              <ToolButton aria-label="Align right">
                <Lines list={rightLines} />
              </ToolButton>
              <Divider />
              <ToolButton aria-label="Decrease indent">
                <IndentIcon out />
              </ToolButton>
              <ToolButton aria-label="Increase indent">
                <IndentIcon />
              </ToolButton>
            </ToolRow>
          </ToolRows>
          <Divider $height={69} $margin="8px 11px 0 4px" />
          <ToolRows>
            <SmallButton>
              <WrapIcon />
              Wrap Text
            </SmallButton>
            <SmallButton $wide $gap={4}>
              <MergeIcon />
              Merge &amp; Center
              <Caret />
            </SmallButton>
          </ToolRows>
        </RibbonGroup>

        <RibbonGroup name="Number" width={184} pad="0 0 0 10px" launcher>
          <ToolRows>
            <SelectBox $width={164}>
              <select aria-label="Number format">
                <option>General</option>
              </select>
              <ChevronDown />
            </SelectBox>
            <ToolRow>
              <ToolButton $size={20}>$</ToolButton>
              <CaretButton width={14} label="Accounting formats" />
              <ToolButton $size={18} $width={30}>
                %
              </ToolButton>
              <ToolButton $width={25} aria-label="Comma style">
                <CommaIcon />
              </ToolButton>
              <Divider $margin="0 5px" />
              <ToolButton aria-label="Increase decimal">
                <DecimalIcon increase />
              </ToolButton>
              <ToolButton aria-label="Decrease decimal">
                <DecimalIcon />
              </ToolButton>
            </ToolRow>
          </ToolRows>
        </RibbonGroup>

        <RibbonGroup name="Styles" width={237} pad="0 0 0 8px">
          <Big width={92} icon={<ConditionalIcon />} lines={["Conditional", "Formatting"]} />
          <Big width={72} icon={<FormatTableIcon />} lines={["Format as", "Table"]} />
          <Big width={56} icon={<CellStylesIcon />} lines={["Cell", "Styles"]} />
        </RibbonGroup>

        <RibbonGroup name="Cells" width={182} pad="0 0 0 10px">
          <Big width={54} icon={<InsertIcon />} lines={["Insert"]} caretBelow />
          <Big width={54} icon={<DeleteIcon />} lines={["Delete"]} caretBelow />
          <Big width={54} icon={<FormatIcon />} lines={["Format"]} caretBelow />
        </RibbonGroup>

        <RibbonGroup name="Editing" width={245} pad="0 0 0 11px">
          <SmallColumn>
            <SmallButton $wide>
              <SumIcon />
              AutoSum
              <Caret />
            </SmallButton>
            <SmallButton>
              <FillDownIcon />
              Fill
              <Caret />
            </SmallButton>
            <SmallButton>
              <EraserIcon />
              Clear
              <Caret />
            </SmallButton>
          </SmallColumn>
          <Big width={56} icon={<SortIcon />} lines={["Sort &", "Filter"]} />
          <Big width={56} icon={<FindIcon />} lines={["Find &", "Select"]} />
        </RibbonGroup>

        <CollapseButton aria-label="Collapse ribbon">
          <CollapseIcon />
        </CollapseButton>
      </Ribbon>

      <FormulaBar>
        <NameBox>
          <input aria-label="Name box" defaultValue="B16" />
          <button aria-label="Named ranges">
            <Caret />
          </button>
        </NameBox>
        <BarDots>
          <DotsIcon />
        </BarDots>
        <FormulaButtons>
          <button aria-label="Cancel">
            <CancelIcon />
          </button>
          <button aria-label="Enter">
            <EnterIcon />
          </button>
          <button aria-label="Insert function">
            <Fx>
              f<small>x</small>
            </Fx>
          </button>
        </FormulaButtons>
        <FormulaInput>
          <textarea aria-label="Formula" />
          <button aria-label="Collapse formula bar">
            <Triangle dir="up" />
          </button>
        </FormulaInput>
      </FormulaBar>

      <Workspace>
        <SheetArea>
          <Sheet>
            <colgroup>
              <col width={26} />
              {columns.map(([name, width]) => (
                <col key={name} width={width} />
              ))}
            </colgroup>
            <thead>
              <tr>
                <Corner aria-label="Select all">
                  <Svg w={12} h={12}>
                    <path d="M12 0v12H0z" fill="#b1b1b1" />
                  </Svg>
                </Corner>
                {columns.map(([name]) => (
                  <ColHead key={name} scope="col" $active={name === "B"}>
                    {name}
                  </ColHead>
                ))}
              </tr>
            </thead>
            <tbody>
              <tr>
                <RowHead scope="row" $height={28}>
                  1
                </RowHead>
                <TitleCell colSpan={3}>Problem #2, Down Under Boomerang</TitleCell>
                {columns.slice(3).map(([name]) => (
                  <Cell key={name} />
                ))}
              </tr>
              {rowNumbers.map((number) => (
                <SheetRow key={number} number={number} />
              ))}
            </tbody>
          </Sheet>
        </SheetArea>
        <VScroll>
          <ScrollButton aria-label="Scroll up">
            <Triangle dir="up" />
          </ScrollButton>
          <VTrack>
            <Thumb />
          </VTrack>
          <ScrollButton aria-label="Scroll down">
            <Triangle dir="down" />
          </ScrollButton>
        </VScroll>
      </Workspace>

      <SheetBar>
        <SheetNav>
          <Triangle dir="left" color="#c0c0c0" />
          <Triangle dir="right" color="#c0c0c0" />
        </SheetNav>
        <SheetTabs>
          <SheetTab>Problem 1</SheetTab>
          <SheetTab $active>Problem 2</SheetTab>
          <SheetTab $plain>Problem 3</SheetTab>
          <SheetTab>Problem 4</SheetTab>
        </SheetTabs>
        <AddSheet aria-label="New sheet">
          <PlusCircle />
        </AddSheet>
        <HScroll>
          <DotsIcon />
          <ScrollButton aria-label="Scroll left">
            <Triangle dir="left" />
          </ScrollButton>
          <HTrack>
            <Thumb />
          </HTrack>
          <ScrollButton aria-label="Scroll right">
            <Triangle dir="right" />
          </ScrollButton>
        </HScroll>
      </SheetBar>

      <StatusBar>
        <span>Ready</span>
        <Tray>
          <ViewButton $active aria-label="Normal">
            <NormalViewIcon />
          </ViewButton>
          <ViewButton aria-label="Page layout">
            <PageViewIcon />
          </ViewButton>
          <ViewButton aria-label="Page break preview">
            <BreakViewIcon />
          </ViewButton>
          <ZoomButton $hover aria-label="Zoom out">
            <Svg w={10} h={2}>
              <path d="M0 0h10v2H0z" fill="#777" />
            </Svg>
          </ZoomButton>
          <ZoomRange type="range" aria-label="Zoom" defaultValue={40} />
          <ZoomButton aria-label="Zoom in">
            <Svg w={10} h={10}>
              <path d="M4 0h2v4h4v2H6v4H4V6H0V4h4z" fill="#666" />
            </Svg>
          </ZoomButton>
          <ZoomLabel>80%</ZoomLabel>
        </Tray>
      </StatusBar>

      <Taskbar>
        <StartButton aria-label="Start">
          <WindowsIcon />
        </StartButton>
        <SearchBox>
          <SearchIcon />
          <input aria-label="Search" placeholder="Type here to search" />
        </SearchBox>
        <TaskButton $stacked aria-label="File Explorer">
          <ExplorerIcon />
        </TaskButton>
        <TaskButton $stacked aria-label="Chrome">
          <ChromeIcon />
        </TaskButton>
        <TaskButton aria-label="Settings">
          <GearIcon />
        </TaskButton>
        <TaskButton aria-label="Control panel">
          <PanelIcon />
        </TaskButton>
        <TaskButton $stacked aria-label="Code editor">
          <CodeIcon />
        </TaskButton>
        <TaskButton aria-label="Document">
          <FileIcon />
        </TaskButton>
        <TaskButton aria-label="Calculator">
          <CalcIcon />
        </TaskButton>
        <TaskButton $stacked aria-label="Word">
          <OfficeIcon letter="W" badge="#185abd" shades={["#41a5ee", "#2b7cd3", "#185abd", "#103f91"]} />
        </TaskButton>
        <TaskButton aria-label="Edge">
          <EdgeIcon />
        </TaskButton>
        <TaskButton $active aria-label="Excel">
          <OfficeIcon letter="X" badge="#107c41" shades={["#33c481", "#21a366", "#107c41", "#185c37"]} />
        </TaskButton>

        <Tray>
          <TrayButton aria-label="Hidden icons">
            <TrayCaret />
          </TrayButton>
          <TrayButton aria-label="Bluetooth">
            <BluetoothIcon />
          </TrayButton>
          <TrayButton aria-label="Updates">
            <TabletIcon />
          </TrayButton>
          <TrayButton aria-label="Battery">
            <BatteryIcon />
          </TrayButton>
          <TrayButton aria-label="Network">
            <GlobeIcon />
          </TrayButton>
          <TrayButton aria-label="Volume">
            <SpeakerIcon />
          </TrayButton>
          <Language>ENG</Language>
          <Clock>
            7:03 PM
            <br />
            11/30/2019
          </Clock>
          <Notifications aria-label="Notifications">
            <NoteIcon />
            <Badge>24</Badge>
          </Notifications>
          <ShowDesktop aria-label="Show desktop" />
        </Tray>
      </Taskbar>

      <Toast role="status">
        <SignalIcon />
        Airplane mode off
      </Toast>
    </Window>
  );
}

export default App;
